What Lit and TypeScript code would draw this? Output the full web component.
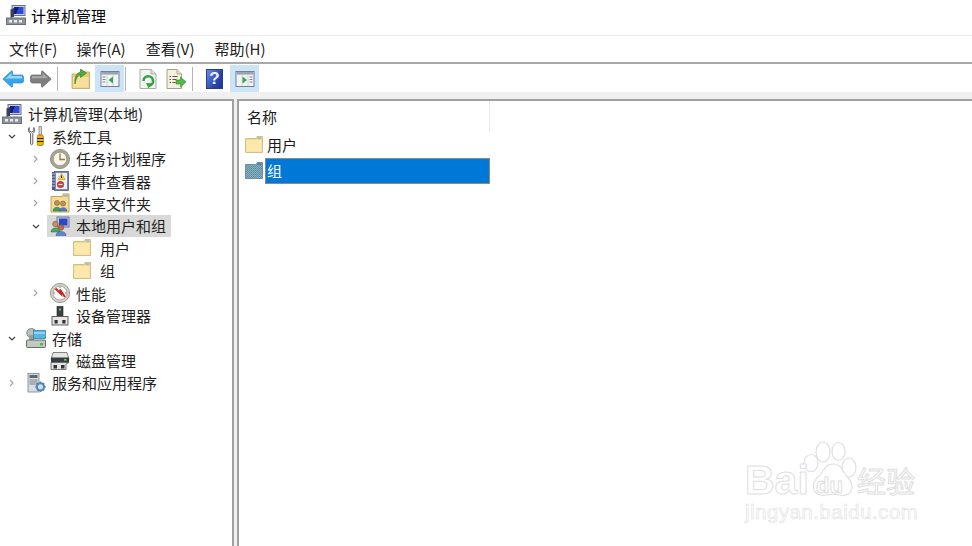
import { LitElement, html, css, svg } from "lit";
import { customElement } from "lit/decorators.js";

const ic = (body: unknown, size = 20, vb = "0 0 20 20") =>
  html`<svg class="ic" width=${size} height=${size} viewBox=${vb}>${body}</svg>`;

const computer = svg`
  <rect x="6" y="0.5" width="13" height="10" fill="#c9ced8" stroke="#6a7488"/>
  <rect x="8" y="2" width="9.5" height="7" fill="#2f4ad8"/>
  <path d="M8 2h5l-3 7H8z" fill="#141d78"/>
  <path d="M4.5 4.5 L8 3 V12 L4.5 13z" fill="#39415a"/>
  <rect x="0.5" y="13" width="19" height="6.5" fill="#8d949c" stroke="#6a7078"/>
  <rect x="3" y="15" width="3" height="2.5" fill="#e8ecee"/><rect x="8" y="15" width="3" height="2.5" fill="#e8ecee"/><rect x="13" y="15" width="3" height="2.5" fill="#e8ecee"/>`;

const tools = svg`
  <path d="M4.5 7.5 C2.5 6.5 1.8 3.5 3.2 1.5 V5 L5.5 6 L7.8 5 V1.5 C9.2 3.5 8.5 6.5 6.8 7.5 V18 Q5.6 19.5 4.5 18z" fill="#ececec" stroke="#666" stroke-width="1"/>
  <rect x="13" y="0.5" width="2.6" height="8.5" fill="#d8d8d8" stroke="#777" stroke-width=".7"/>
  <rect x="11.3" y="9" width="6" height="10.5" rx="1.6" fill="#f2b600" stroke="#8a6a00" stroke-width=".7"/>
  <path d="M11.3 12.5h6M11.3 15.5h6" stroke="#222" stroke-width="1"/>`;

const clock = svg`
  <circle cx="10" cy="10" r="9.6" fill="#a9a595" stroke="#85857a" stroke-width=".8"/>
  <circle cx="10" cy="10" r="6.8" fill="#faf5e6" stroke="#8b8b80" stroke-width=".7"/>
  <path d="M10 4.5 V10.5 H15" fill="none" stroke="#8d7a55" stroke-width="1.3"/>`;

const eventlog = svg`
  <rect x="2" y="1" width="3" height="18" fill="#4a5a86"/>
  <rect x="4.5" y="0.5" width="14" height="19" fill="#7c8cb0" stroke="#4b5b85" stroke-width=".8"/>
  <rect x="6" y="2" width="11" height="16" fill="#eef0f4"/>
  <path d="M2 3h3M2 6h3M2 9h3M2 12h3M2 15h3" stroke="#dfe3ec" stroke-width=".8"/>
  <path d="M11.5 2.5 L15 8.5 H8z" fill="#f4cf3a" stroke="#a98515" stroke-width=".5"/>
  <path d="M11.5 4.5v2.5" stroke="#222" stroke-width=".9"/>
  <circle cx="10.5" cy="13.5" r="3.6" fill="#cc3a3a"/>
  <path d="M8.5 13.5h4" stroke="#fff" stroke-width="1.2"/>`;

const shared = svg`
  <path d="M1 3.5 H13 V1 H19 V19 H1z" fill="#f5dc93" stroke="#bfa45e"/>
  <rect x="14" y="2" width="4" height="1.6" fill="#8bb6d6"/>
  <circle cx="7" cy="10" r="2.5" fill="#c58d58" stroke="#6b4a2a" stroke-width=".5"/>
  <path d="M3 18 C3 13 11 13 11 18z" fill="#3f9f59" stroke="#2a6b3d" stroke-width=".5"/>
  <circle cx="13" cy="10.5" r="2.5" fill="#c58d58" stroke="#6b4a2a" stroke-width=".5"/>
  <path d="M9.5 18 C9.5 13.5 17 13.5 17 18z" fill="#4f7fc9" stroke="#2d4f87" stroke-width=".5"/>`;

const users = svg`
  <rect x="7" y="1" width="12" height="10" fill="#c6d1de" stroke="#55627a" stroke-width=".8"/>
  <rect x="9" y="2.5" width="8.5" height="7" fill="#2c47cf"/>
  <circle cx="5.5" cy="8" r="2.8" fill="#c78f5a" stroke="#6c4a2a" stroke-width=".5"/>
  <path d="M1 16 C1 10.5 10 10.5 10 16z" fill="#49a65e" stroke="#2b6c3e" stroke-width=".5"/>
  <circle cx="11" cy="11.5" r="2.8" fill="#b76e52" stroke="#6c4a2a" stroke-width=".5"/>
  <path d="M6 19.5 C6 14 16 14 16 19.5z" fill="#5d86cc" stroke="#345792" stroke-width=".5"/>`;

const folder = svg`
  <path d="M0.5 2.5 H10.5 L12 1.5 V0.5 H17.5 V16.5 H0.5z" fill="#f3d88a" stroke="#c9b477" stroke-width=".8"/>
  <path d="M1.3 4 H16.7 V15.7 H1.3z" fill="#fbe9ac"/>
  <rect x="12.5" y="1.2" width="4" height="1.8" fill="#9bc0d8"/>`;

const folderSel = svg`
  <defs><pattern id="dith" width="2" height="2" patternUnits="userSpaceOnUse">
    <rect width="2" height="2" fill="#8fb1ba"/><rect width="1" height="1" fill="#4f8aa8"/><rect x="1" y="1" width="1" height="1" fill="#5f94a8"/>
  </pattern></defs>
  <path d="M0.5 2.5 H10.5 L12 1.5 V0.5 H17.5 V16.5 H0.5z" fill="url(#dith)" stroke="#5b8294" stroke-width=".8"/>
  <rect x="12.5" y="1.2" width="4" height="1.8" fill="#3f86c0"/>`;

const perf = svg`
  <circle cx="10" cy="10" r="9.6" fill="#d6d4cc" stroke="#85857c" stroke-width=".8"/>
  <circle cx="10" cy="10" r="7" fill="#fbfaf6" stroke="#8b8b80" stroke-width=".7"/>
  <path d="M5.5 5.5 L11 11 L10 6.5 L15 14" fill="none" stroke="#c8242a" stroke-width="1.9"/>
  <path d="M10 3.5v1.5M3.5 10H5M16.5 10H15" stroke="#556" stroke-width=".8"/>`;

const device = svg`
  <rect x="7" y="0.5" width="6" height="10" fill="#3b3f44" stroke="#222" stroke-width=".6"/>
  <rect x="9" y="2.5" width="2" height="2" fill="#68c35f"/>
  <rect x="2" y="10.5" width="16" height="8.5" fill="#e6e6e6" stroke="#555" stroke-width=".9"/>
  <rect x="4.5" y="14" width="3.2" height="3.5" fill="#333"/>
  <rect x="12.3" y="14" width="3.2" height="3.5" fill="#333"/>`;

const storage = svg`
  <ellipse cx="5.5" cy="5" rx="4.8" ry="4.5" fill="#b9bfbb" stroke="#70766f" stroke-width=".8"/>
  <rect x="3" y="7" width="5" height="6" fill="#979e99"/>
  <rect x="7.5" y="2.5" width="12" height="8" fill="#52b8e3" stroke="#3684a8" stroke-width=".8"/>
  <path d="M8 5h11" stroke="#d2effa" stroke-width="1"/>
  <rect x="0.5" y="12" width="19" height="7.5" rx="1" fill="#c3c9c2" stroke="#5a605a" stroke-width=".9"/>
  <rect x="14" y="15" width="3" height="2.5" fill="#59b84e"/>`;

const disk = svg`
  <path d="M3 1.5 H17 L19 8.5 H1z" fill="#e6e6e6" stroke="#555" stroke-width=".7"/>
  <rect x="1" y="6.5" width="18" height="5" fill="#3a3d40"/>
  <rect x="14" y="8" width="2.5" height="1.6" fill="#6bd05f"/>
  <path d="M1 11.5 H19 L16 13 V18.5 H1z" fill="#e4e4e4" stroke="#555" stroke-width=".8"/>
  <rect x="3.5" y="14" width="3.5" height="3.5" fill="#333"/>
  <rect x="11" y="14" width="3.5" height="3.5" fill="#333"/>`;

const services = svg`
  <rect x="2" y="0.5" width="11" height="18.5" fill="#d8dde2" stroke="#7b8288" stroke-width=".8"/>
  <rect x="3.5" y="2" width="8" height="3" fill="#5d6870"/>
  <path d="M3.5 7h8M3.5 9h8M3.5 11h8" stroke="#717980" stroke-width=".9"/>
  <circle cx="14.5" cy="13.8" r="3.6" fill="#cfe0f2" stroke="#4f84bd" stroke-width="2"/>
  <path d="M14.5 8.5v2M14.5 17v2M9.3 13.8h2M17.7 13.8h2M10.8 10l1.4 1.4M16.8 16l1.4 1.4M18.2 10l-1.4 1.4M12.2 16l-1.4 1.4" stroke="#4f84bd" stroke-width="1.5"/>`;

const chevR = html`<svg class="chev" width="16" height="16" viewBox="0 0 16 16"><path d="M6 5 L9 8 L6 11" fill="none" stroke="#a6a6a6" stroke-width="1.2"/></svg>`;
const chevD = html`<svg class="chev" width="16" height="16" viewBox="0 0 16 16"><path d="M5 7 L8 10 L11 7" fill="none" stroke="#404040" stroke-width="1.2"/></svg>`;
const chevNone = html`<span class="chev-gap"></span>`;

type Row = { level: number; chev: "r" | "d" | ""; icon: unknown; label: string; sel?: boolean };

const rows: Row[] = [
  { level: 0, chev: "", icon: computer, label: "计算机管理(本地)" },
  { level: 1, chev: "d", icon: tools, label: "系统工具" },
  { level: 2, chev: "r", icon: clock, label: "任务计划程序" },
  { level: 2, chev: "r", icon: eventlog, label: "事件查看器" },
  { level: 2, chev: "r", icon: shared, label: "共享文件夹" },
  { level: 2, chev: "d", icon: users, label: "本地用户和组", sel: true },
  { level: 3, chev: "", icon: folder, label: "用户" },
  { level: 3, chev: "", icon: folder, label: "组" },
  { level: 2, chev: "r", icon: perf, label: "性能" },
  { level: 2, chev: "", icon: device, label: "设备管理器" },
  { level: 1, chev: "d", icon: storage, label: "存储" },
  { level: 2, chev: "", icon: disk, label: "磁盘管理" },
  { level: 1, chev: "r", icon: services, label: "服务和应用程序" },
];

const btnBack = svg`<path d="M0.8 11 L9.5 3 Q10.5 2.5 10.5 4 V7 H19.5 Q21.5 7 21.5 9 V13 Q21.5 15 19.5 15 H10.5 V18 Q10.5 19.5 9.5 19 z" fill="#37a5ea" stroke="#2a86cc" stroke-width=".7"/><path d="M3 11 L9.5 5 V8 H20 V10.5 H6z" fill="#9ad6f8"/>`;
const btnFwd = svg`<path d="M21.2 11 L12.5 3 Q11.5 2.5 11.5 4 V7 H2.5 Q0.5 7 0.5 9 V13 Q0.5 15 2.5 15 H11.5 V18 Q11.5 19.5 12.5 19 z" fill="#7f7f7f" stroke="#666" stroke-width=".7"/><path d="M2 8 H12.5 V5 L18 10 L2 10.5z" fill="#a8a8a8"/>`;
const btnUp = svg`
  <path d="M1 5 H10 V3 H18.5 V19.5 H1z" fill="#eccb78" stroke="#c0a259" stroke-width=".8"/>
  <path d="M2 8 H17.5 V18.5 H2z" fill="#f6df9c"/>
  <path d="M4 15 C5 9 7 6.5 9.5 5.5 V8.5 L15.5 4 L9.5 0 V3 C6.5 3.5 3 8 4 15z" fill="#4faa3a" stroke="#2f7a24" stroke-width=".6"/>`;
const win = (inner: unknown) => svg`
  <rect x="1" y="2.5" width="18" height="15" fill="#f2f4f6" stroke="#76818d"/>
  <rect x="1.5" y="3" width="17" height="2.6" fill="#9aa5b1"/>
  <path d="M7 6v11M13 6v11" stroke="#b8c0c9" stroke-width=".6"/>
  ${inner}`;
const btnHide = win(svg`<path d="M2.5 8h3M2.5 10.5h3M2.5 13h3" stroke="#7688a0" stroke-width="1"/><path d="M13 7.5 V14.5 L8.5 11z" fill="#35a545"/>`);
const btnShow = win(svg`<path d="M14.5 8h3M14.5 10.5h3M14.5 13h3" stroke="#7688a0" stroke-width="1"/><path d="M7.5 7.5 V14.5 L12 11z" fill="#35a545"/>`);
const btnRefresh = svg`
  <path d="M2 0.5 H13 L18 5 V19.5 H2z" fill="#f4f4f2" stroke="#a0a09c" stroke-width=".9"/>
  <path d="M13 0.5 V5 H18" fill="#dcdcd8" stroke="#a0a09c" stroke-width=".7"/>
  <path d="M5.5 12 A4.8 4.8 0 1 1 11 16.8" fill="none" stroke="#35a53f" stroke-width="2.6"/>
  <path d="M8 14 L13.5 14.3 L10.5 19.5z" fill="#35a53f"/>`;
const btnExport = svg`
  <path d="M1 0.5 H11 L15.5 5 V19.5 H1z" fill="#f6f1dc" stroke="#9a9788" stroke-width=".9"/>
  <path d="M11 0.5 V5 H15.5" fill="#e3dec8" stroke="#9a9788" stroke-width=".7"/>
  <path d="M3.5 7.5h1.5M6.5 7.5h5M3.5 10.5h1.5M6.5 10.5h4M3.5 13.5h1.5M6.5 13.5h3" stroke="#555" stroke-width="1"/>
  <path d="M10 11 H14.5 V8 L20 13 L14.5 18 V15 H10z" fill="#58b848" stroke="#2f8428" stroke-width=".6"/>`;

@customElement("app-root")
export class AppRoot extends LitElement {
  static styles = css`
    :host {
      display: block;
      position: relative;
      width: 972px;
      height: 546px;
      overflow: hidden;
      background: #fff;
      font-family: "Noto Sans CJK SC", "Noto Sans", sans-serif;
      color: #1a1a1a;
    }
    .ic { display: block; flex: none; }
    .title {
      height: 35px;
      box-sizing: border-box;
      display: flex;
      align-items: center;
      padding: 0 0 5px 6px;
      gap: 5px;
      font-size: 15px;
      color: #000;
    }
    .title-line { height: 1px; background: #ededed; }
    .menu {
      display: flex;
      align-items: center;
      font-size: 15px;
      color: #222;
      padding: 0 0 2px 9px;
      height: 24px;
      gap: 20px;
      border-bottom: 2px solid #a9a9a9;
    }
    .menu .first { margin-right: -1px; }
    .tools {
      height: 28px;
      box-sizing: border-box;
      padding-top: 1px;
      display: flex;
      align-items: center;
    }
    .tb {
      height: 27px;
      display: flex;
      align-items: center;
      justify-content: center;
      flex: none;
      width: 29px;
    }
    .tb.back { width: 26px; }
    .tb.fwd { width: 30px; }
    .tb.up { margin-left: 8px; }
    .tb.refresh { width: 28px; margin-left: 8px; }
    .tb.export { width: 28px; }
    .tb.helpb { margin-left: 7px; margin-right: 1px; }
    .tb.on { background: #cce4f7; }
    .sep { width: 1px; height: 24px; background: #b4b4b4; flex: none; margin-left: 1px; }
    .sep.three { margin-left: 2px; }
    .help {
      width: 17px;
      height: 20px;
      background: linear-gradient(120deg, #6d8de0, #2a47ad 60%, #1d3490);
      border: 1px solid #2a3b8c;
      box-sizing: border-box;
      color: #eef2ff;
      font: bold 17px/18px "Liberation Sans", sans-serif;
      text-align: center;
      display: block;
    }
    .main {
      height: 454px;
      display: flex;
      background: #f0f0f0;
      padding-top: 7px;
    }
    .tree {
      width: 234px;
      flex: none;
      background: #fff;
      border-top: 2px solid #a0a0a0;
      border-right: 2px solid #a0a0a0;
      box-sizing: border-box;
      padding-top: 1.5px;
    }
    .row {
      height: 22.45px;
      display: flex;
      align-items: center;
      font-size: 15px;
      color: #1f1f1f;
    }
    .row .pad { flex: none; }
    .chev { display: block; flex: none; }
    .chev-gap { width: 16px; flex: none; }
    .cell {
      display: flex;
      align-items: center;
      gap: 6px;
      height: 100%;
      padding-left: 3px;
      margin-left: 3px;
    }
    .cell.root { margin-left: 0; padding-left: 2px; }
    .cell.leaf { gap: 9px; }
    .cell.sel { background: #d9d9d9; padding-right: 5px; }
    .split { width: 3px; flex: none; }
    .list {
      flex: 1;
      background: #fff;
      border-top: 2px solid #a0a0a0;
      border-left: 2px solid #a0a0a0;
    }
    .hdr {
      width: 251px;
      height: 31px;
      display: flex;
      align-items: center;
      padding-left: 8px;
      box-sizing: border-box;
      font-size: 15px;
      border-right: 1px solid #e8e8e8;
    }
    .item {
      display: flex;
      align-items: center;
      height: 26px;
      width: 251px;
      padding-left: 6px;
      box-sizing: border-box;
      font-size: 15px;
      gap: 2px;
    }
    .item .lbl {
      flex: 1;
      height: 26px;
      line-height: 26px;
      padding-left: 2px;
      box-sizing: border-box;
    }
    .item.sel .lbl {
      background: #0078d7;
      color: #fff;
      outline: 1px solid #8a8a8a;
      outline-offset: -1px;
    }
    .wm {
      position: absolute;
      left: 745px;
      top: 440px;
      width: 180px;
      height: 85px;
      pointer-events: none;
    }
    .wm .big, .wm .cn, .wm .url, .wm .du {
      position: absolute;
      color: #fff;
      -webkit-text-stroke: 1px #e0e0e0;
      font-family: "Liberation Sans", sans-serif;
    }
    .wm .big { left: 0; top: 20px; font-size: 41px; font-weight: 700; line-height: 40px; }
    .wm .du { left: 71px; top: 34px; font-size: 22px; font-weight: 700; line-height: 24px; }
    .wm .cn { left: 112px; top: 23px; font-size: 29px; line-height: 34px; font-family: "Noto Sans CJK SC", sans-serif; }
    .wm .url { left: 0; top: 62px; font-size: 20px; line-height: 20px; letter-spacing: .7px; -webkit-text-stroke: .7px #e4e4e4; }
    .wm svg { position: absolute; left: 55px; top: 0; }
  `;

  render() {
    return html`
      <div class="title">${ic(computer, 20)}<span>计算机管理</span></div>
      <div class="title-line"></div>
      <div class="menu"><span class="first">文件(F)</span><span>操作(A)</span><span>查看(V)</span><span>帮助(H)</span></div>
      <div class="tools">
        <div class="tb back">${ic(btnBack, 22, "0 0 22 22")}</div>
        <div class="tb fwd">${ic(btnFwd, 22, "0 0 22 22")}</div>
        <div class="sep"></div>
        <div class="tb up">${ic(btnUp)}</div>
        <div class="tb on">${ic(btnHide)}</div>
        <div class="sep"></div>
        <div class="tb refresh">${ic(btnRefresh)}</div>
        <div class="tb export">${ic(btnExport)}</div>
        <div class="sep three"></div>
        <div class="tb helpb"><span class="help">?</span></div>
        <div class="tb on">${ic(btnShow)}</div>
      </div>
      <div class="main">
        <div class="tree">
          ${rows.map((r) => {
            const pad = [0, 4, 28, 67][r.level];
            const chev = r.chev === "r" ? chevR : r.chev === "d" ? chevD : r.level === 0 || r.level === 3 ? "" : chevNone;
            const cls = [r.sel ? "sel" : "", r.level === 0 ? "root" : "", r.level === 3 ? "leaf" : ""].join(" ");
            return html`<div class="row">
              <span class="pad" style="width:${pad}px"></span>${chev}
              <div class="cell ${cls}">
                ${r.level === 3 ? ic(r.icon, 18, "0 0 18 18") : ic(r.icon)}<span>${r.label}</span>
              </div>
            </div>`;
          })}
        </div>
        <div class="split"></div>
        <div class="list">
          <div class="hdr">名称</div>
          <div class="item">${ic(folder, 18, "0 0 18 18")}<span class="lbl">用户</span></div>
          <div class="item sel">${ic(folderSel, 18, "0 0 18 18")}<span class="lbl">组</span></div>
        </div>
      </div>
      <div class="wm">
        <svg width="60" height="60" viewBox="0 0 60 60" fill="#fff" stroke="#e0e0e0" stroke-width="1.2">
          <ellipse cx="11" cy="23" rx="7" ry="8.5"/>
          <ellipse cx="23" cy="12" rx="7" ry="10"/>
          <ellipse cx="38.5" cy="11.5" rx="6.5" ry="9"/>
          <ellipse cx="49" cy="27.5" rx="7" ry="9.5"/>
          <path d="M33 24 C26 24 24 30 20 35 C14 40 12 45 14 50 C16 55 22 56 27 55 C31 54 35 54 39 55 C45 56 51 55 52 48 C53 42 48 38 45 34 C42 29 40 24 33 24z"/>
        </svg>
        <div class="big">Bai</div>
        <div class="du">du</div>
        <div class="cn">经验</div>
        <div class="url">jingyan.baidu.com</div>
      </div>
    `;
  }
}
